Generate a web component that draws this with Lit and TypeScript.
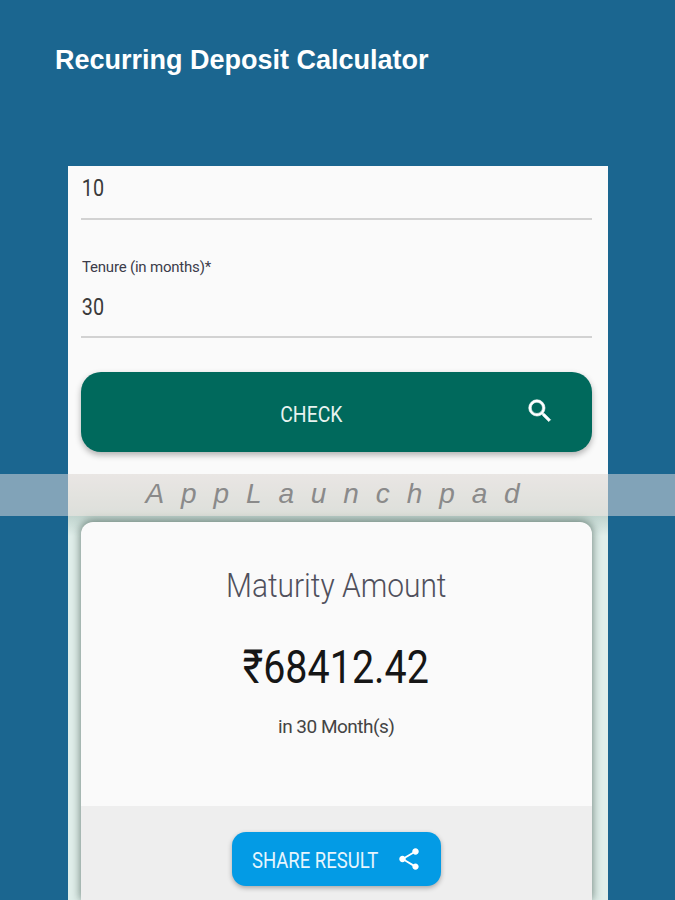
import { LitElement, html, css } from "lit";
import { customElement } from "lit/decorators.js";

@customElement("app-root")
export class AppRoot extends LitElement {
  static styles = css`
    :host { display: block; width: 675px; height: 900px; overflow: hidden; position: relative; background: #1b6690; font-family: Roboto, "Open Sans", sans-serif; }
    .title { margin: 0; padding: 45px 0 0 55px; height: 166px; box-sizing: border-box; font: bold 27px/30px "Liberation Sans", sans-serif; color: #fff; }
    .sheet { margin-left: 68px; width: 540px; height: 734px; background: #fafafa; box-sizing: border-box; padding: 0 16.5px 0 13px; display: flex; flex-direction: column; }
    .field { display: flex; flex-direction: column; border-bottom: 2px solid #d2d2d2; box-sizing: border-box; flex: none; }
    .f1 { height: 54px; }
    .f2 { height: 84px; margin-top: 34px; padding-top: 4px; }
    .value { font-size: 23px; line-height: 28px; color: #3a3a3a; transform: scaleX(.86); transform-origin: left; padding-left: 1px; }
    .f1 .value { margin-top: 9px; }
    .label { font-size: 15px; line-height: 18px; color: #3c3c4a; letter-spacing: -0.2px; padding-left: 1px; }
    .f2 .value { margin-top: 18px; }
    .check { position: relative; margin-top: 34px; height: 80px; border-radius: 20px; background: #00695c; color: #e8f3f0; display: flex; align-items: center; justify-content: center; box-shadow: 0 3px 6px rgba(0,0,0,.3); flex: none; font-size: 22px; padding-right: 50px; padding-top: 5px; box-sizing: border-box; }
    .check span { transform: scaleX(.88); }
    .check svg { position: absolute; left: 444px; top: 24px; width: 30px; height: 30px; fill: #fff; stroke: #fff; stroke-width: .5; }
    .lower { flex: 1; margin: 22px -16.5px 0 -13px; padding: 48px 16.5px 0 13px; background: linear-gradient(#d8e0e0 0, #c0d4ce 42px, #e0eeea 62px); display: flex; flex-direction: column; min-height: 0; }
    .result { flex: 1; background: #fafafa; border-radius: 12px 12px 0 0; box-shadow: 0 -1px 9px 1px rgba(50,75,65,.6); display: flex; flex-direction: column; align-items: center; overflow: hidden; }
    .heading { margin-top: 41px; font-size: 34px; line-height: 44px; font-weight: 300; color: #50505c; transform: scaleX(.88); }
    .amount { margin-top: 34px; font-size: 47px; line-height: 52px; font-weight: 400; color: #161616; transform: scaleX(.84); }
    .sub { margin-top: 21px; font-size: 19px; line-height: 26px; color: #444; letter-spacing: -0.5px; }
    .foot { align-self: stretch; margin-top: 66px; flex: 1; background: #eeeeee; display: flex; justify-content: center; padding-top: 26px; }
    .share { width: 209px; height: 54px; border-radius: 14px; background: #039be5; color: #e6f5fd; display: flex; align-items: center; box-sizing: border-box; padding-left: 20px; gap: 18px; font-size: 22px; box-shadow: 0 2px 5px rgba(0,0,0,.3); }
    .share span { width: 126px; white-space: nowrap; transform: scaleX(.84); transform-origin: left; padding-top: 2px; }
    .share svg { width: 26px; height: 26px; fill: #fff; }
    .band { position: absolute; left: 0; right: 0; top: 474px; height: 42px; background: rgba(255,238,232,.45); display: flex; align-items: center; justify-content: center; padding-left: 7px; font: italic 28px/42px "Liberation Sans", sans-serif; letter-spacing: 16.9px; color: #8a8a8a; }
    .band span { margin-top: -3px; }
  `;

  render() {
    return html`
      <h1 class="title">Recurring Deposit Calculator</h1>
      <div class="sheet">
        <div class="field f1"><div class="value">10</div></div>
        <div class="field f2">
          <div class="label">Tenure (in months)*</div>
          <div class="value">30</div>
        </div>
        <div class="check"><span>CHECK</span>
          <svg viewBox="0 0 24 24"><path d="M15.5 14h-.79l-.28-.27A6.47 6.47 0 0 0 16 9.5 6.5 6.5 0 1 0 9.5 16c1.61 0 3.09-.59 4.23-1.57l.27.28v.79l5 4.99L20.49 19l-4.99-5zm-6 0C7.01 14 5 11.99 5 9.5S7.01 5 9.5 5 14 7.01 14 9.5 11.99 14 9.5 14z"/></svg>
        </div>
        <div class="lower">
          <div class="result">
            <div class="heading">Maturity Amount</div>
            <div class="amount">₹68412.42</div>
            <div class="sub">in 30 Month(s)</div>
            <div class="foot">
              <div class="share"><span>SHARE RESULT</span>
                <svg viewBox="0 0 24 24"><path d="M18 16.08c-.76 0-1.44.3-1.96.77L8.91 12.7c.05-.23.09-.46.09-.7s-.04-.47-.09-.7l7.05-4.11c.54.5 1.25.81 2.04.81 1.66 0 3-1.34 3-3s-1.34-3-3-3-3 1.34-3 3c0 .24.04.47.09.7L8.04 9.81C7.5 9.31 6.79 9 6 9c-1.66 0-3 1.34-3 3s1.34 3 3 3c.79 0 1.5-.31 2.04-.81l7.12 4.16c-.05.21-.08.43-.08.65 0 1.61 1.31 2.92 2.92 2.92s2.92-1.31 2.92-2.92-1.31-2.92-2.92-2.92z"/></svg>
              </div>
            </div>
          </div>
        </div>
      </div>
      <div class="band"><span>AppLaunchpad</span></div>
    `;
  }
}
